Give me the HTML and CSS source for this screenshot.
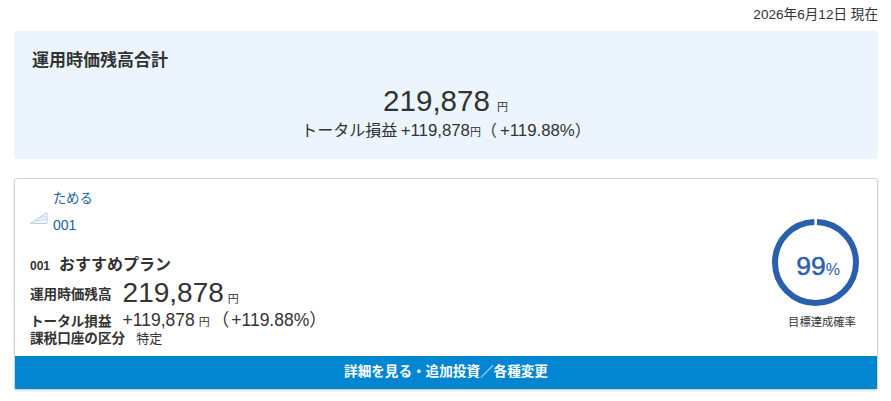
FILE: index.html
```html
<!DOCTYPE html>
<html lang="ja">
<head>
<meta charset="utf-8">
<title>運用時価残高合計</title>
<link rel="stylesheet" href="styles.css">
</head>
<body>
<main class="page">
  <p class="asof">2026年6月12日 現在</p>
  <section class="summary">
    <h2 class="summary-title">運用時価残高合計</h2>
    <p class="summary-value"><span class="summary-num">219,878</span><span class="summary-yen">円</span></p>
    <p class="summary-gain">トータル損益 <span class="latin latin-first">+119,878</span><span class="summary-gain-yen">円</span><span class="paren-open">（</span><span class="latin">+119.88%</span>）</p>
  </section>
  <section class="card">
    <div class="card-body">
      <div class="card-main">
        <div class="goal">
          <svg class="goal-icon" width="18" height="14" viewBox="0 0 18 14" aria-hidden="true">
            <path d="M0.5 12.5 L17 1.5 L17 12.5 Z" fill="#f3f7fb" stroke="#b9cde4" stroke-width="1"/>
            <path d="M5 10 L17 8 M9 7 L17 5" stroke="#c9d9ec" stroke-width="1" fill="none"/>
          </svg>
          <div class="goal-text">
            <span class="goal-kind">ためる</span>
            <span>001</span>
          </div>
        </div>
        <h3 class="plan"><span class="plan-no">001</span><span class="plan-name">おすすめプラン</span></h3>
        <div class="row-value">
          <span class="label">運用時価残高</span>
          <span class="value-num">219,878</span>
          <span class="value-yen">円</span>
        </div>
        <div class="row-gain">
          <span class="label">トータル損益</span>
          <span class="gain">+119,878<span class="gain-yen">円</span><span class="gain-open">（</span>+119.88%）</span>
        </div>
        <div class="row-tax">
          <span class="label">課税口座の区分</span>
          <span class="tax">特定</span>
        </div>
      </div>
      <div class="rate">
        <div class="ring">
          <svg width="87" height="87" viewBox="0 0 87 87" aria-hidden="true">
            <circle cx="43.5" cy="43.5" r="40.5" fill="none" stroke="#2a60ab" stroke-width="6" stroke-dasharray="251.4 3.1" stroke-dashoffset="-1.5" transform="rotate(-90 43.5 43.5)"/>
          </svg>
          <div class="ring-text"><span class="ring-num">99</span><span class="ring-pct">%</span></div>
        </div>
        <div class="rate-label">目標達成確率</div>
      </div>
    </div>
    <div class="card-action">詳細を見る・追加投資／各種変更</div>
  </section>
</main>
</body>
</html>
```
FILE: styles.css
```css
* { box-sizing: border-box; }
html, body { margin: 0; padding: 0; background: #fff; }
body {
  font-family: "Liberation Sans", "Noto Sans CJK JP", sans-serif;
  color: #333;
  overflow: hidden;
}
p, h2, h3 { margin: 0; font-weight: normal; }
.page { width: 891px; height: 401px; padding: 0 13px 0 14px; }
.asof { height: 31px; padding-top: 7px; text-align: right; font-size: 13.6px; line-height: 16px; }
.summary {
  height: 128px;
  background: #ecf5fd;
  border-radius: 3px;
  padding: 19px 18px 0;
  text-align: center;
}
.summary-title { text-align: left; font-size: 17px; line-height: 21px; font-weight: 700; }
.summary-value { margin-top: 11px; height: 38px; line-height: 38px; padding-right: 1px; }
.summary-num { font-size: 29.6px; }
.summary-yen { font-size: 11px; margin-left: 7px; }
.summary-gain { margin-top: 0; font-size: 16px; line-height: 22px; }
.latin { font-size: 16.8px; }
.latin-first { margin-left: -1px; }
.summary-gain-yen { font-size: 11px; }
.paren-open { margin-right: 3px; }
.card {
  margin-top: 19px;
  height: 212px;
  border: 1px solid #d2d2d2;
  border-radius: 3px;
  box-shadow: 0 1px 2px rgba(0,0,0,.12);
  display: flex;
  flex-direction: column;
}
.card-body { flex: 1; display: flex; justify-content: space-between; padding: 0 16px 0 15px; }
.goal { display: flex; align-items: flex-start; gap: 5px; padding-top: 10px; }
.goal-icon { margin-top: 22px; }
.goal-text { display: flex; flex-direction: column; gap: 9px; font-size: 14px; line-height: 18px; color: #1a5f9e; }
.goal-kind { font-size: 13.3px; padding-top: 1px; margin-bottom: -1px; }
.plan { display: flex; align-items: baseline; margin-top: 20px; line-height: 22px; font-weight: 700; }
.plan-no { font-size: 12px; margin-right: 9px; }
.plan-name { font-size: 16px; }
.row-value { display: flex; align-items: center; height: 33px; margin-top: -1px; }
.label { font-size: 13.6px; font-weight: 700; }
.value-num { font-size: 28px; line-height: 33px; margin-left: 11px; }
.value-yen { font-size: 11px; margin: 10px 0 0 4px; }
.row-gain { display: flex; align-items: baseline; height: 20px; margin-top: 1px; line-height: 20px; }
.gain { font-size: 17.5px; margin-left: 11px; }
.gain-yen { font-size: 11px; margin-left: 4px; }
.gain-open { margin: 0 2px 0 2px; }
.row-tax { display: flex; align-items: baseline; line-height: 15px; margin-top: 1px; }
.tax { font-size: 13px; margin-left: 11px; }
.rate { display: flex; flex-direction: column; align-items: center; padding-top: 40px; width: 87px; margin-right: 2px; }
.ring { position: relative; width: 87px; height: 87px; }
.ring svg { display: block; }
.ring-text { position: absolute; inset: 8px 0 0 5px; display: flex; align-items: center; justify-content: center; color: #2a60ab; }
.ring-num { font-size: 26.5px; -webkit-text-stroke: .5px #2a60ab; }
.ring-pct { font-size: 16px; margin-top: 6px; }
.rate-label { margin: 9px 0 0 13px; font-size: 11.3px; line-height: 15px; white-space: nowrap; }
.card-action {
  height: 33px;
  background: #0386d2;
  color: #fff;
  font-size: 13.6px;
  font-weight: 700;
  line-height: 32px;
  text-align: center;
}
```
